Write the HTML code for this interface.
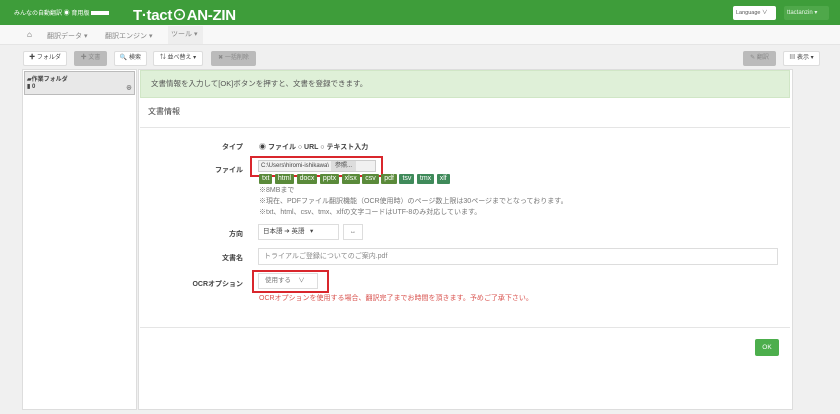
<!DOCTYPE html><html><head><meta charset="utf-8"><style>
*{box-sizing:border-box;margin:0;padding:0}
body{width:840px;height:414px;overflow:hidden;background:#f0f0f0;font-family:"Liberation Sans","Noto Sans CJK JP",sans-serif;font-size:7px;color:#444;position:relative}
.a{position:absolute}
.btn{position:absolute;background:#fff;border:1px solid #ddd;border-radius:2px;font-size:6px;line-height:13px;text-align:center;color:#444}
.g{background:#bbb;color:#888;border-color:#bbb}
.lb{position:absolute;right:597px;font-size:7px;font-weight:bold;color:#444}
.bd{display:inline-block;background:#5a8a3a;color:#fff;font-size:7px;padding:0 3px;margin-right:2.5px;line-height:10px;border-radius:1px}
.bd.t{background:#3f8a5a}
</style></head><body>
<div class="a" style="left:0;top:0;width:840px;height:25px;background:#3e9d3a"></div>
<div class="a" style="left:14px;top:8px;color:#fff;font-size:6px">みんなの自動翻訳 ◉ 育用版 <span style="display:inline-block;width:18px;height:4px;background:#fff;vertical-align:middle"></span></div>
<div class="a" style="left:133px;top:4px;color:#fff;font-size:15px;font-weight:bold;letter-spacing:-0.3px">T·tact⊙AN-ZIN</div>
<div class="a" style="left:733px;top:6px;width:43px;height:14px;background:#fff;border-radius:2px;font-size:5.5px;line-height:14px;padding-left:3px;color:#555">Language ∨</div>
<div class="a" style="left:784px;top:6px;width:45px;height:14px;background:#4fa84a;border-radius:2px;font-size:6px;line-height:14px;padding-left:3px;color:#e8f5e8">ttactanzin ▾</div>
<div class="a" style="left:0;top:25px;width:840px;height:20px;background:#f8f8f8;border-bottom:1px solid #e5e5e5"></div>
<div class="a" style="left:27px;top:30px;font-size:8px;color:#555">⌂</div>
<div class="a" style="left:47px;top:31px;font-size:7px;color:#888">翻訳データ ▾</div>
<div class="a" style="left:105px;top:31px;font-size:7px;color:#888">翻訳エンジン ▾</div>
<div class="a" style="left:168px;top:26px;width:35px;height:18px;background:#eee;font-size:7px;color:#888;line-height:18px;padding-left:3px">ツール ▾</div>
<div class="btn" style="left:23px;top:51px;width:44px">✚ フォルダ</div>
<div class="btn g" style="left:74px;top:51px;width:33px">✚ 文書</div>
<div class="btn" style="left:114px;top:51px;width:33px">🔍 検索</div>
<div class="btn" style="left:153px;top:51px;width:50px">⇅ 並べ替え ▾</div>
<div class="btn g" style="left:211px;top:51px;width:45px">✖ 一括削除</div>
<div class="btn g" style="left:743px;top:51px;width:33px">✎ 翻訳</div>
<div class="btn" style="left:783px;top:51px;width:37px">▤ 表示 ▾</div>
<div class="a" style="left:22px;top:69px;width:115px;height:341px;background:#fff;border:1px solid #ddd"></div>
<div class="a" style="left:24px;top:71px;width:111px;height:24px;background:#e8e8e8;border:1px solid #bbb;font-size:6px;font-weight:bold;padding:2px">▰作業フォルダ<br>▮ 0<span style="float:right;font-weight:normal">⊕</span></div>
<div class="a" style="left:138px;top:69px;width:655px;height:341px;background:#fff;border:1px solid #ddd"></div>
<div class="a" style="left:140px;top:70px;width:650px;height:28px;background:#dff0d8;border:1px solid #d0e6c6;font-size:7.5px;color:#555;line-height:26px;padding-left:10px">文書情報を入力して[OK]ボタンを押すと、文書を登録できます。</div>
<div class="a" style="left:148px;top:106px;font-size:8px;color:#444">文書情報</div>
<div class="a" style="left:140px;top:127px;width:650px;height:1px;background:#e5e5e5"></div>
<div class="lb" style="top:142px">タイプ</div>
<div class="a" style="left:259px;top:142px;font-size:7px;font-weight:bold">◉ ファイル ○ URL ○ テキスト入力</div>
<div class="lb" style="top:165px">ファイル</div>
<div class="a" style="left:258px;top:160px;width:118px;height:12px;background:#f1f1f1;border:1px solid #ccc;font-size:6px;line-height:10px;padding-left:2px">C:\Users\hiromi-ishikawa\<span style="display:inline-block;background:#ddd;padding:0 4px;margin-left:2px">参照...</span></div>
<div class="a" style="left:250px;top:156px;width:133px;height:21px;border:2px solid #d9262c"></div>
<div class="a" style="left:259px;top:174px;white-space:nowrap"><span class="bd">txt</span><span class="bd">html</span><span class="bd">docx</span><span class="bd">pptx</span><span class="bd">xlsx</span><span class="bd">csv</span><span class="bd">pdf</span><span class="bd t">tsv</span><span class="bd t">tmx</span><span class="bd t">xlf</span></div>
<div class="a" style="left:259px;top:185px;font-size:7px;color:#777;line-height:11px;white-space:nowrap">※8MBまで<br>※現在、PDFファイル翻訳機能（OCR使用時）のページ数上限は30ページまでとなっております。<br>※txt、html、csv、tmx、xlfの文字コードはUTF-8のみ対応しています。</div>
<div class="lb" style="top:229px">方向</div>
<div class="a" style="left:258px;top:224px;width:81px;height:16px;border:1px solid #ddd;font-size:6.5px;line-height:14px;padding-left:4px">日本語 ➔ 英語 &nbsp; ▾</div>
<div class="a" style="left:343px;top:224px;width:20px;height:16px;border:1px solid #ddd;font-size:6px;line-height:14px;text-align:center">↔</div>
<div class="lb" style="top:253px">文書名</div>
<div class="a" style="left:258px;top:248px;width:520px;height:17px;border:1px solid #ddd;font-size:7px;line-height:15px;padding-left:5px;color:#888">トライアルご登録についてのご案内.pdf</div>
<div class="lb" style="top:279px">OCRオプション</div>
<div class="a" style="left:258px;top:273px;width:60px;height:16px;border:1px solid #ddd;font-size:6.5px;line-height:14px;padding-left:6px;color:#777">使用する &nbsp;&nbsp; ∨</div>
<div class="a" style="left:252px;top:270px;width:77px;height:23px;border:2px solid #d9262c"></div>
<div class="a" style="left:259px;top:293px;font-size:7px;color:#d9534f;white-space:nowrap">OCRオプションを使用する場合、翻訳完了までお時間を頂きます。予めご了承下さい。</div>
<div class="a" style="left:140px;top:327px;width:650px;height:1px;background:#e5e5e5"></div>
<div class="a" style="left:755px;top:339px;width:24px;height:17px;background:#4cae4c;border-radius:2px;color:#fff;font-size:6.5px;line-height:17px;text-align:center">OK</div>
</body></html>
